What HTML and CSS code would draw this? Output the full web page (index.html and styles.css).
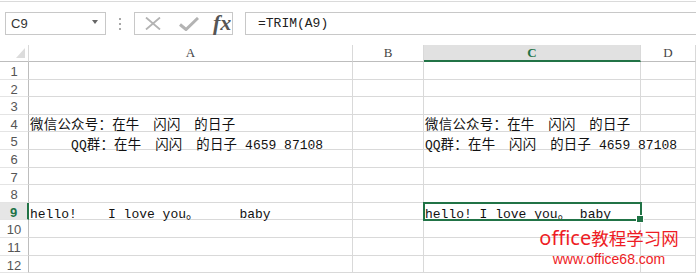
FILE: index.html
```html
<!DOCTYPE html>
<html lang="zh-CN">
<head>
    <meta charset="UTF-8">
    <title>TRIM</title>
    <link rel="stylesheet" href="styles.css">
</head>
<body>

<div class="toolbar">
    <div class="namebox">
        <span>C9</span>
        <span class="caret"></span>
    </div>
    <div class="grip"><i></i><i></i><i></i></div>
    <div class="fxbuttons">
        <svg class="cancel" width="16" height="13" viewBox="0 0 16 13">
            <path d="M1 0.5 L15 12.5 M15 0.5 L1 12.5" />
        </svg>
        <svg class="enter" width="20" height="14" viewBox="0 0 20 14">
            <path d="M1 7.5 L7 12.5 L19 1" />
        </svg>
        <span class="fx">fx</span>
    </div>
    <div class="formula">=TRIM(A9)</div>
</div>

<div class="sheet">
    <!-- header row -->
    <div class="corner">
        <svg width="9" height="10" viewBox="0 0 9 10"><path d="M9 0 L9 10 L0 10 Z" /></svg>
    </div>
    <div class="col-head">A</div>
    <div class="col-head">B</div>
    <div class="col-head active">C</div>
    <div class="col-head">D</div>

    <div class="row-head">1</div><div class="cell"></div><div class="cell"></div><div class="cell"></div><div class="cell"></div>
    <div class="row-head">2</div><div class="cell"></div><div class="cell"></div><div class="cell"></div><div class="cell"></div>
    <div class="row-head">3</div><div class="cell"></div><div class="cell"></div><div class="cell"></div><div class="cell"></div>

    <div class="row-head">4</div>
    <div class="cell raised"><span class="cjk">微信公众号：在牛　闪闪　的日子</span></div>
    <div class="cell"></div>
    <div class="cell raised"><span class="cjk">微信公众号：在牛　闪闪　的日子</span></div>
    <div class="cell"></div>

    <div class="row-head">5</div>
    <div class="cell lowered"><span class="cjk">　　　</span>QQ<span class="cjk">群：在牛　闪闪　的日子</span> 4659 87108</div>
    <div class="cell"></div>
    <div class="cell lowered span2">QQ<span class="cjk">群：在牛　闪闪　的日子</span> 4659 87108</div>

    <div class="row-head">6</div><div class="cell"></div><div class="cell"></div><div class="cell"></div><div class="cell"></div>
    <div class="row-head">7</div><div class="cell"></div><div class="cell"></div><div class="cell"></div><div class="cell"></div>
    <div class="row-head">8</div><div class="cell"></div><div class="cell"></div><div class="cell"></div><div class="cell"></div>

    <div class="row-head active">9</div>
    <div class="cell">hello!    I love you<span class="full">。</span>     baby</div>
    <div class="cell"></div>
    <div class="cell selected">hello! I love you<span class="full">。</span> baby</div>
    <div class="cell"></div>

    <div class="row-head">10</div><div class="cell"></div><div class="cell"></div><div class="cell"></div><div class="cell"></div>
    <div class="row-head">11</div><div class="cell"></div><div class="cell"></div><div class="cell"></div><div class="cell"></div>
    <div class="row-head">12</div><div class="cell"></div><div class="cell"></div><div class="cell"></div><div class="cell"></div>

    <div class="watermark">
        <div class="wm-title">office<span class="wm-cjk">教程学习网</span></div>
        <div class="wm-url">www.office68.com</div>
    </div>
</div>

</body>
</html>
```

FILE: styles.css
```css
* {
    box-sizing: border-box;
}
body {
    margin: 0;
    padding-top: 1px;
    background-color: #fff;
    font-family: "Liberation Sans", Arial, sans-serif;
    color: #222;
    overflow: hidden;
}

/* formula bar */
.toolbar {
    display: flex;
    align-items: center;
    border-top: 1px solid #dadada;
    padding: 10px 0 10px 5px;
    height: 44px;
}
.namebox {
    display: flex;
    align-items: center;
    justify-content: space-between;
    width: 101px;
    height: 23px;
    border: 1px solid #c8c8c8;
    padding: 0 7px 0 5px;
    font-size: 13px;
    color: #333;
}
.caret {
    width: 0;
    height: 0;
    border-left: 3.5px solid transparent;
    border-right: 3.5px solid transparent;
    border-top: 4px solid #666;
    margin-top: -3px;
}
.grip {
    display: flex;
    flex-direction: column;
    gap: 3px;
    margin-left: 13px;
    width: 2px;
}
.grip i {
    display: block;
    width: 2px;
    height: 2px;
    background-color: #a8a8a8;
}
.fxbuttons {
    display: flex;
    align-items: center;
    width: 99px;
    height: 23px;
    margin-left: 13px;
    border: 1px solid #c8c8c8;
    padding-left: 10px;
}
.fxbuttons svg path {
    fill: none;
    stroke: #b3b3b3;
}
.cancel path {
    stroke-width: 1.8;
}
.enter {
    margin-left: 18px;
}
.enter path {
    stroke-width: 3;
}
.fx {
    margin-left: 14px;
    font-family: "Liberation Serif", serif;
    font-style: italic;
    font-weight: bold;
    font-size: 22px;
    line-height: 20px;
    color: #555;
    margin-top: -2px;
}
.formula {
    flex: 1;
    height: 23px;
    margin-left: 12px;
    border: 1px solid #c8c8c8;
    border-right: none;
    padding-left: 12px;
    font-family: "Liberation Mono", monospace;
    font-size: 13px;
    line-height: 21px;
    color: #222;
}

/* worksheet */
.sheet {
    position: relative;
    display: grid;
    grid-template-columns: 29px 324px 71px 217px 1fr;
    grid-template-rows: 17px;
    grid-auto-rows: 17.6px;
}
.corner,
.col-head,
.row-head,
.cell {
    border-right: 1px solid #d9d9d9;
    border-bottom: 1px solid #d9d9d9;
}
.corner {
    display: flex;
    align-items: flex-end;
    justify-content: flex-end;
    padding: 0 3px 3px 0;
    border-bottom-color: #bdbdbd;
}
.corner path {
    fill: #dcdcdc;
}
.col-head {
    text-align: center;
    font-family: "Liberation Serif", serif;
    font-size: 13px;
    line-height: 16px;
    color: #444;
    border-bottom-color: #bdbdbd;
}
.col-head.active {
    background-color: #e1e1e1;
    color: #217346;
    font-weight: bold;
    border-bottom: 2px solid #217346;
}
.row-head {
    padding-top: 2px;
    text-align: center;
    font-size: 13px;
    line-height: 15px;
    color: #555;
    border-bottom-color: #e4e4e4;
    border-right-color: #bdbdbd;
}
.row-head.active {
    background-color: #e6e6e6;
    color: #217346;
    font-weight: bold;
    border-right: 2px solid #217346;
}
.cell {
    padding: 3px 0 0 1px;
    font-family: "Liberation Mono", "Noto Sans CJK SC", monospace;
    font-size: 13px;
    line-height: 14px;
    white-space: pre;
    color: #111;
}
.cell.raised {
    padding-top: 1.5px;
}
.cell.lowered {
    padding-top: 4px;
}
.cell.span2 {
    grid-column: span 2;
}
.cjk {
    display: inline-block;
    font-family: "Noto Sans CJK SC", sans-serif;
    font-size: 13.4px;
    line-height: 14px;
    letter-spacing: 0.3px;
}
.full {
    display: inline-block;
    width: 2ch;
    font-family: "Noto Sans CJK SC", sans-serif;
    line-height: 14px;
}
.cell.selected {
    position: relative;
    outline: 2px solid #217346;
    outline-offset: -1px;
}
.cell.selected::after {
    content: "";
    position: absolute;
    right: -4px;
    bottom: -4px;
    width: 6px;
    height: 6px;
    background-color: #217346;
    border: 1px solid #fff;
}

/* site watermark over the grid */
.watermark {
    position: absolute;
    left: 529px;
    top: 182px;
    width: 160px;
    text-align: center;
    color: #ee1c25;
}
.wm-title {
    font-family: "Noto Sans", sans-serif;
    font-size: 20px;
    line-height: 22px;
}
.wm-cjk {
    font-family: "Noto Sans CJK SC", sans-serif;
    font-size: 17.5px;
}
.wm-url {
    font-size: 14px;
    line-height: 16px;
    margin-top: 2px;
}
```
